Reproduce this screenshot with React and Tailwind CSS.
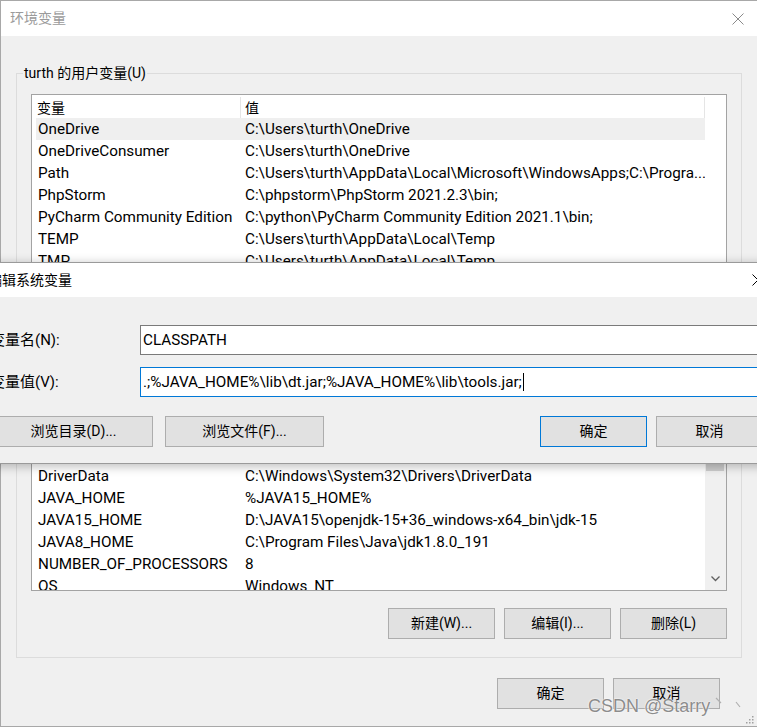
import React from 'react';

const userVars = [
  ['OneDrive', 'C:\\Users\\turth\\OneDrive', true],
  ['OneDriveConsumer', 'C:\\Users\\turth\\OneDrive'],
  ['Path', 'C:\\Users\\turth\\AppData\\Local\\Microsoft\\WindowsApps;C:\\Progra...'],
  ['PhpStorm', 'C:\\phpstorm\\PhpStorm 2021.2.3\\bin;'],
  ['PyCharm Community Edition', 'C:\\python\\PyCharm Community Edition 2021.1\\bin;'],
  ['TEMP', 'C:\\Users\\turth\\AppData\\Local\\Temp'],
  ['TMP', 'C:\\Users\\turth\\AppData\\Local\\Temp'],
  ['', ''],
];

const sysVars = [
  ['CLASSPATH', '.;%JAVA_HOME%\\lib\\dt.jar;%JAVA_HOME%\\lib\\tools.jar;'],
  ['ComSpec', 'C:\\Windows\\system32\\cmd.exe'],
  ['DriverData', 'C:\\Windows\\System32\\Drivers\\DriverData'],
  ['JAVA_HOME', '%JAVA15_HOME%'],
  ['JAVA15_HOME', 'D:\\JAVA15\\openjdk-15+36_windows-x64_bin\\jdk-15'],
  ['JAVA8_HOME', 'C:\\Program Files\\Java\\jdk1.8.0_191'],
  ['NUMBER_OF_PROCESSORS', '8'],
  ['OS', 'Windows_NT'],
];

const CloseX = ({ className = '' }) => (
  <svg width="12" height="12" viewBox="0 0 12 12" className={className}>
    <path d="M0.5 0.5 L11.5 11.5 M11.5 0.5 L0.5 11.5" stroke="currentColor" strokeWidth="1" fill="none" />
  </svg>
);

const Btn = ({ children, primary, className = '' }) => (
  <div
    className={`h-[31px] flex items-center justify-center bg-[#e1e1e1] border text-[14px] ${
      primary ? 'border-[#0078d7]' : 'border-[#adadad]'
    } ${className}`}
  >
    {children}
  </div>
);

// list box: header + rows, scrollbar column on the right
const VarList = ({ rows, height, scroll }) => (
  <div className={`border border-[#a3a3a3] bg-white flex overflow-hidden ${height}`}>
    <div className="flex-1 pl-[4px] overflow-hidden">
      <div className="h-[23px] flex text-[14px] leading-[23px] pt-[2px]">
        <div className="w-[205px] pl-[1px] border-r border-[#e5e5e5]">变量</div>
        <div className="flex-1 pl-[4px] border-r border-[#e5e5e5]">值</div>
      </div>
      {rows.map(([name, value, selected], i) => (
        <div
          key={i}
          className={`h-[22px] pt-px flex items-center text-[15.25px] whitespace-nowrap ${selected ? 'bg-[#efefef]' : ''}`}
        >
          <div className="w-[205px] pl-[2px] overflow-hidden">{name}</div>
          <div className="flex-1 pl-[4px] overflow-hidden">{value}</div>
        </div>
      ))}
    </div>
    {scroll ? (
      <div className="w-[21px] bg-[#f0f0f0] flex flex-col">
        <div className="h-[17px]" />
        <div className="h-[56px] ml-[1px] mr-[2px] bg-[#cdcdcd]" />
        <div className="flex-1" />
        <div className="h-[17px] mb-[3px] flex items-center justify-center text-[#606060]">
          <svg width="9" height="6" viewBox="0 0 9 6">
            <path d="M0.5 0.5 L4.5 4.5 L8.5 0.5" stroke="currentColor" strokeWidth="1.3" fill="none" />
          </svg>
        </div>
      </div>
    ) : (
      <div className="w-[21px] bg-white" />
    )}
  </div>
);

const GroupBox = ({ label, className = '', children }) => (
  <div className={`relative border border-[#dcdcdc] px-[14px] pt-[20px] ${className}`}>
    <div className="absolute left-[6px] -top-[11px] px-[1px] bg-[#f0f0f0] text-[14px] leading-[20px]">{label}</div>
    {children}
  </div>
);

const MainWindow = () => (
  <div className="h-[727px] flex flex-col border-l border-t border-b border-[#a8a8a8] bg-[#f0f0f0]">
    <div className="h-[35px] shrink-0 bg-white flex items-center justify-between pl-[9px] pr-[13px]">
      <span className="text-[14px] text-[#9b9b9b]">环境变量</span>
      <CloseX className="text-[#8a8a8a]" />
    </div>

    <GroupBox label="turth 的用户变量(U)" className="mt-[37px] mx-[15px] h-[268px] shrink-0">
      <VarList rows={userVars} height="h-[200px]" />
    </GroupBox>

    <GroupBox label="系统变量(S)" className="mt-[35px] mx-[15px] pb-[18px] shrink-0">
      <VarList rows={sysVars} height="h-[194px]" scroll />
      <div className="mt-[17px] flex justify-end gap-[9px]">
        <Btn className="w-[107px]">新建(W)...</Btn>
        <Btn className="w-[107px]">编辑(I)...</Btn>
        <Btn className="w-[107px]">删除(L)</Btn>
      </div>
    </GroupBox>

    <div className="mt-[20px] flex justify-end gap-[9px] pr-[37px]">
      <Btn className="w-[107px]">确定</Btn>
      <Btn className="w-[107px]">取消</Btn>
    </div>
  </div>
);

const EditDialog = () => (
  <div className="absolute left-[-30px] top-[262px] w-[811px] bg-[#f0f0f0] border border-[#9a9a9a] shadow-[0_2px_10px_rgba(0,0,0,0.28)]">
    <div className="h-[34px] bg-white flex items-center justify-between pl-[17px] pr-[16px]">
      <span className="text-[14px]">编辑系统变量</span>
      <CloseX className="text-black" />
    </div>
    <div className="pl-[19px] pr-[17px] pt-[28px] pb-[16px]">
      <div className="flex items-center">
        <div className="w-[150px] text-[15px] pt-px">变量名(N):</div>
        <div className="flex-1 h-[30px] bg-white border border-[#7a7a7a] pl-[2px] flex items-center text-[15.25px]">
          CLASSPATH
        </div>
      </div>
      <div className="mt-[12px] flex items-center">
        <div className="w-[150px] text-[15px] pt-px">变量值(V):</div>
        <div className="flex-1 h-[30px] bg-white border border-[#0078d7] pl-[2px] flex items-center text-[15.25px] whitespace-nowrap">
          .;%JAVA_HOME%\lib\dt.jar;%JAVA_HOME%\lib\tools.jar;
          <span className="inline-block w-px h-[18px] bg-black ml-px" />
        </div>
      </div>
      <div className="mt-[19px] flex items-center">
        <Btn className="w-[159px] ml-[4px]">浏览目录(D)...</Btn>
        <Btn className="w-[159px] ml-[12px]">浏览文件(F)...</Btn>
        <div className="flex-1" />
        <Btn primary className="w-[107px]">确定</Btn>
        <Btn className="w-[107px] ml-[9px]">取消</Btn>
      </div>
    </div>
  </div>
);

const Watermark = () => (
  <>
    <div className="absolute left-[588px] top-[695px] text-[18px] leading-[22px] text-[#8c8c8c] font-[family-name:'Liberation_Sans',Arial,sans-serif] [text-shadow:0_0_2px_#fff,0_0_1px_#fff]">
      CSDN @Starry
    </div>
    <svg className="absolute left-[714px] top-[696px]" width="30" height="16" viewBox="0 0 30 16">
      <path d="M2 2 L7 7 M22 6 L26 11" stroke="#b0b0b0" strokeWidth="1.2" fill="none" />
    </svg>
    <svg className="absolute left-[745px] top-[715px]" width="10" height="10" viewBox="0 0 10 10">
      <g fill="#a0a0a0">
        <rect x="7" y="1" width="1.5" height="1.5" />
        <rect x="4" y="4" width="1.5" height="1.5" />
        <rect x="7" y="4" width="1.5" height="1.5" />
        <rect x="1" y="7" width="1.5" height="1.5" />
        <rect x="4" y="7" width="1.5" height="1.5" />
        <rect x="7" y="7" width="1.5" height="1.5" />
      </g>
    </svg>
  </>
);

export default function App() {
  return (
    <div className="relative w-[757px] h-[727px] overflow-hidden bg-[#f0f0f0] text-black font-[family-name:Roboto,'Noto_Sans_CJK_SC',sans-serif]">
      <MainWindow />
      <EditDialog />
      <Watermark />
    </div>
  );
}
